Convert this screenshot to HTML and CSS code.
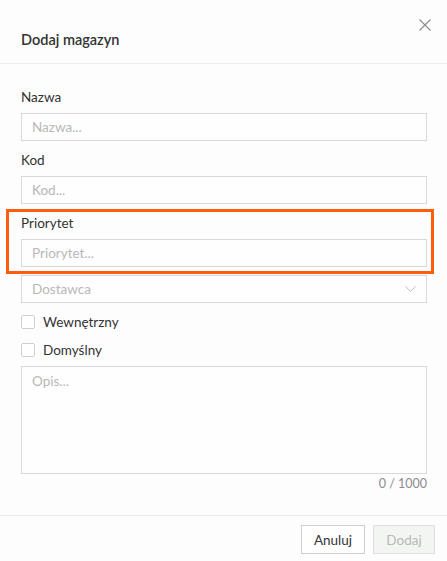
FILE: index.html
```html
<!DOCTYPE html>
<html lang="pl">
<head>
<meta charset="utf-8">
<title>Dodaj magazyn</title>
<link rel="stylesheet" href="styles.css">
</head>
<body>
<div class="dialog">
  <header class="dialog-header">
    <h1 class="dialog-title">Dodaj magazyn</h1>
    <button class="close-btn" type="button" aria-label="Zamknij">
      <svg width="12" height="12" viewBox="0 0 12 12"><path d="M0.5 0.5 L11.5 11.5 M11.5 0.5 L0.5 11.5" stroke="#8a8a8a" stroke-width="1.1" fill="none"/></svg>
    </button>
  </header>
  <main class="dialog-body">
    <div class="field">
      <label class="field-label">Nazwa</label>
      <div class="input"><span class="placeholder">Nazwa...</span></div>
    </div>
    <div class="field">
      <label class="field-label">Kod</label>
      <div class="input"><span class="placeholder">Kod...</span></div>
    </div>
    <div class="field field-highlight">
      <label class="field-label">Priorytet</label>
      <div class="input"><span class="placeholder">Priorytet...</span></div>
    </div>
    <div class="input select">
      <span class="placeholder">Dostawca</span>
      <svg class="chevron" width="11" height="6" viewBox="0 0 11 6"><path d="M0.5 0.5 L5.5 5.3 L10.5 0.5" stroke="#bdbdbd" stroke-width="1" fill="none"/></svg>
    </div>
    <div class="checks">
      <div class="check-row"><span class="checkbox"></span><span class="check-label">Wewnętrzny</span></div>
      <div class="check-row"><span class="checkbox"></span><span class="check-label">Domyślny</span></div>
    </div>
    <div class="textarea"><span class="placeholder">Opis...</span></div>
    <div class="counter">0 / 1000</div>
  </main>
  <footer class="dialog-footer">
    <button class="btn btn-cancel" type="button">Anuluj</button>
    <button class="btn btn-disabled" type="button">Dodaj</button>
  </footer>
</div>
</body>
</html>
```
FILE: styles.css
```css
* { box-sizing: border-box; }
html, body { margin: 0; padding: 0; }
body {
  background: #fcfdfc;
  font-family: Lato, "Open Sans", "Liberation Sans", sans-serif;
  font-size: 13.5px;
  color: #333;
}
.dialog {
  width: 447px;
  height: 561px;
  display: flex;
  flex-direction: column;
}
.dialog-header {
  position: relative;
  height: 64px;
  border-bottom: 1px solid #ebeceb;
  padding: 30px 21px 0;
}
.dialog-title {
  margin: 0;
  font-size: 14.5px;
  font-weight: 600;
  line-height: 20px;
  color: #333;
}
.close-btn {
  position: absolute;
  top: 19px;
  right: 16px;
  width: 12px;
  height: 12px;
  padding: 0;
  border: 0;
  background: none;
  display: block;
}
.close-btn svg { display: block; }
.dialog-body {
  flex: 1;
  padding: 23px 20px 0 21px;
  display: flex;
  flex-direction: column;
}
.field {
  display: flex;
  flex-direction: column;
  gap: 6px;
  margin-bottom: 9px;
}
.field-label {
  line-height: 20px;
  color: #333;
}
.field-highlight {
  position: relative;
  margin-bottom: 8px;
}
.field-highlight::after {
  content: "";
  position: absolute;
  left: -15px;
  right: -7px;
  top: -4px;
  bottom: -7px;
  border: 3px solid #ff5c0d;
}
.input {
  height: 28px;
  border: 1px solid #d9d9d9;
  background: #fdfefd;
  padding: 0 10px;
  display: flex;
  align-items: center;
}
.placeholder {
  color: #b8b8b8;
  line-height: 20px;
}
.select {
  justify-content: space-between;
  margin-bottom: 9px;
}
.chevron { display: block; }
.checks {
  display: flex;
  flex-direction: column;
  gap: 8px;
  margin-bottom: 6px;
}
.check-row {
  display: flex;
  align-items: center;
  gap: 8px;
  height: 20px;
}
.checkbox {
  width: 14px;
  height: 14px;
  border: 1px solid #d0d0d0;
  border-radius: 2px;
  background: #fff;
}
.check-label { color: #333; line-height: 20px; }
.textarea {
  height: 108px;
  border: 1px solid #d9d9d9;
  background: #fdfefd;
  padding: 4px 10px;
}
.counter {
  text-align: right;
  color: #8c8c8c;
  font-size: 12.5px;
  line-height: 20px;
}
.dialog-footer {
  height: 46px;
  border-top: 1px solid #ebeceb;
  display: flex;
  justify-content: flex-end;
  gap: 8px;
  padding: 9px 12px 0;
}
.btn {
  height: 29px;
  padding: 0;
  border: 1px solid #cfcfcf;
  background: #fff;
  font-family: inherit;
  font-size: 13.5px;
  color: #333;
  text-align: center;
}
.btn-cancel { width: 64px; }
.btn-disabled {
  width: 62px;
  background: #f3f5f3;
  border-color: #dedede;
  color: #b8b8b8;
}
```
